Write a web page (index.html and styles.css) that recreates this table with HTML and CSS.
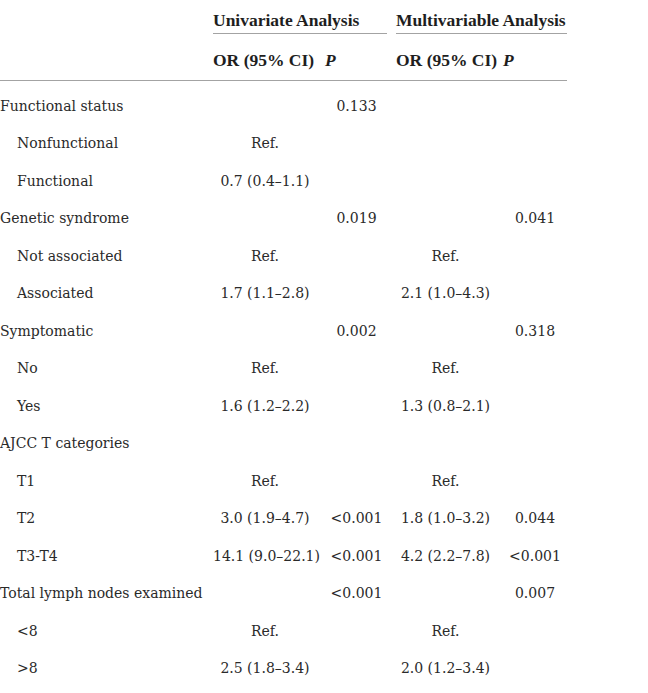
FILE: index.html
```html
<!DOCTYPE html>
<html lang="en">
<head>
<meta charset="utf-8">
<title>Table</title>
<link rel="stylesheet" href="styles.css">
</head>
<body>
<table class="tbl">
  <colgroup>
    <col class="c0"><col class="c1"><col class="c2"><col class="c3"><col class="c4">
  </colgroup>
  <thead>
    <tr class="h1">
      <th></th>
      <th colspan="2"><div class="grp grp-uni">Univariate Analysis</div></th>
      <th colspan="2"><div class="grp">Multivariable Analysis</div></th>
    </tr>
    <tr class="h2">
      <th></th>
      <th>OR (95% CI)</th>
      <th><i>P</i></th>
      <th>OR (95% CI)</th>
      <th><i>P</i></th>
    </tr>
  </thead>
  <tbody>
    <tr class="first"><td>Functional status</td><td></td><td>0.133</td><td></td><td></td></tr>
    <tr><td class="sub">Nonfunctional</td><td>Ref.</td><td></td><td></td><td></td></tr>
    <tr><td class="sub">Functional</td><td>0.7 (0.4–1.1)</td><td></td><td></td><td></td></tr>
    <tr><td>Genetic syndrome</td><td></td><td>0.019</td><td></td><td>0.041</td></tr>
    <tr><td class="sub">Not associated</td><td>Ref.</td><td></td><td>Ref.</td><td></td></tr>
    <tr><td class="sub">Associated</td><td>1.7 (1.1–2.8)</td><td></td><td>2.1 (1.0–4.3)</td><td></td></tr>
    <tr><td>Symptomatic</td><td></td><td>0.002</td><td></td><td>0.318</td></tr>
    <tr><td class="sub">No</td><td>Ref.</td><td></td><td>Ref.</td><td></td></tr>
    <tr><td class="sub">Yes</td><td>1.6 (1.2–2.2)</td><td></td><td>1.3 (0.8–2.1)</td><td></td></tr>
    <tr><td>AJCC T categories</td><td></td><td></td><td></td><td></td></tr>
    <tr><td class="sub">T1</td><td>Ref.</td><td></td><td>Ref.</td><td></td></tr>
    <tr><td class="sub">T2</td><td>3.0 (1.9–4.7)</td><td>&lt;0.001</td><td>1.8 (1.0–3.2)</td><td>0.044</td></tr>
    <tr><td class="sub">T3-T4</td><td>14.1 (9.0–22.1)</td><td>&lt;0.001</td><td>4.2 (2.2–7.8)</td><td>&lt;0.001</td></tr>
    <tr><td>Total lymph nodes examined</td><td></td><td>&lt;0.001</td><td></td><td>0.007</td></tr>
    <tr><td class="sub">&lt;8</td><td>Ref.</td><td></td><td>Ref.</td><td></td></tr>
    <tr><td class="sub">&gt;8</td><td>2.5 (1.8–3.4)</td><td></td><td>2.0 (1.2–3.4)</td><td></td></tr>
  </tbody>
</table>
</body>
</html>
```
FILE: styles.css
```css
html, body {
  margin: 0;
  padding: 0;
  background: #ffffff;
}

body {
  font-family: "DejaVu Serif", "Liberation Serif", serif;
  font-size: 14px;
  color: #2a2a2a;
}

.tbl {
  border-collapse: separate;
  border-spacing: 0;
  table-layout: fixed;
  width: 567px;
}

.c0 { width: 213px; }
.c1 { width: 112px; }
.c2 { width: 71px; }
.c3 { width: 107px; }
.c4 { width: 64px; }

th, td {
  padding: 0 8px 0 0;
  white-space: nowrap;
}

th:last-child, td:last-child {
  padding-right: 0;
}

thead th {
  font-family: "Liberation Serif", serif;
  font-weight: bold;
  font-size: 17.5px;
  text-align: left;
  color: #1e1e1e;
}

.h1 th {
  padding: 0;
  height: 34px;
  vertical-align: top;
}

.grp {
  padding-top: 10px;
  padding-bottom: 3px;
  line-height: 20px;
  border-bottom: 1px solid #a3a3a3;
}

.grp-uni {
  margin-right: 9px;
}

.h2 th {
  padding-top: 16px;
  padding-bottom: 10px;
  line-height: 20px;
  border-bottom: 1px solid #a3a3a3;
  vertical-align: top;
}

.h2 th i {
  font-style: italic;
}

tbody td {
  height: 37.5px;
  line-height: 20px;
  vertical-align: middle;
  text-align: center;
}

tbody td:first-child {
  text-align: left;
}

tbody td.sub {
  padding-left: 17px;
}

tbody tr.first td {
  padding-top: 6px;
}
```
